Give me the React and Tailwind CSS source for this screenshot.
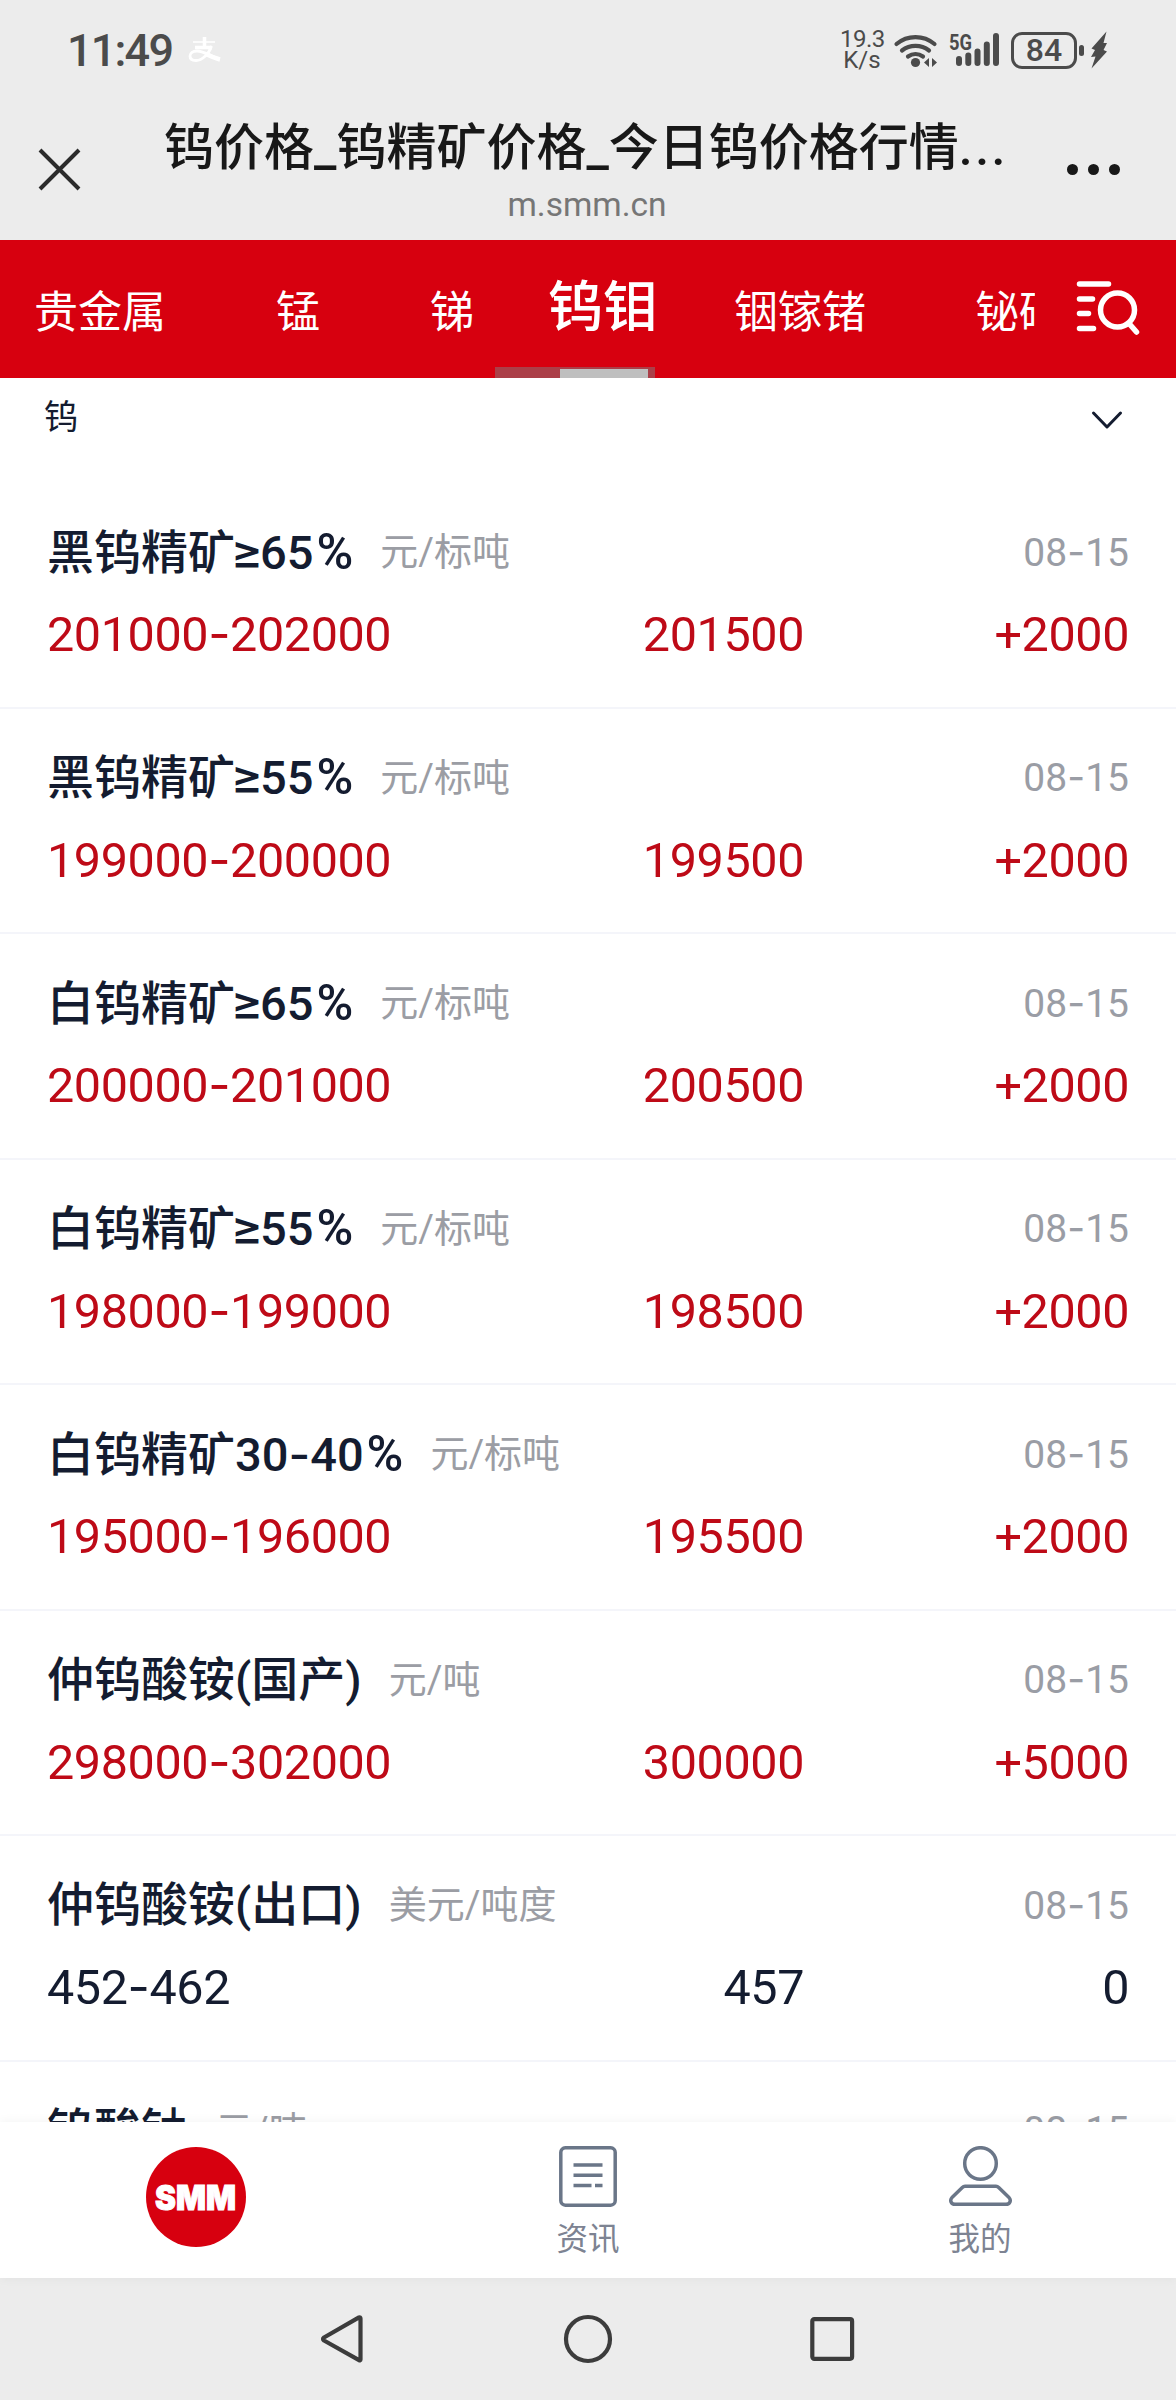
const TABS = [
  { label: '贵金属', className: 'w-[130px] ml-[34px]' },
  { label: '锰', className: 'w-[44px] ml-[112px]' },
  { label: '锑', className: 'w-[44px] ml-[110px]' },
  { label: '钨钼', active: true, className: 'w-[110px] ml-[74px]' },
  { label: '铟镓锗', className: 'w-[132px] ml-[76px]' },
  { label: '铋硒碲', className: 'w-[132px] ml-[109px]' },
]

const PRICES = [
  { name: '黑钨精矿≥65%', unit: '元/标吨', date: '08-15', range: '201000-202000', avg: '201500', change: '+2000' },
  { name: '黑钨精矿≥55%', unit: '元/标吨', date: '08-15', range: '199000-200000', avg: '199500', change: '+2000' },
  { name: '白钨精矿≥65%', unit: '元/标吨', date: '08-15', range: '200000-201000', avg: '200500', change: '+2000' },
  { name: '白钨精矿≥55%', unit: '元/标吨', date: '08-15', range: '198000-199000', avg: '198500', change: '+2000' },
  { name: '白钨精矿30-40%', unit: '元/标吨', date: '08-15', range: '195000-196000', avg: '195500', change: '+2000' },
  { name: '仲钨酸铵(国产)', unit: '元/吨', date: '08-15', range: '298000-302000', avg: '300000', change: '+5000' },
  { name: '仲钨酸铵(出口)', unit: '美元/吨度', date: '08-15', range: '452-462', avg: '457', change: '0' },
  { name: '钨酸钠', unit: '元/吨', date: '08-15', range: '', avg: '', change: '' },
]

// Inter has the wide hyphen and ≥, the rest of the text stays in Roboto.
const SYMBOLS = {
  '-': "font-['Inter']",
  '≥': "font-['Inter'] text-[48px] -ml-[4px] -mr-[3px]",
  '%': 'text-[50px] ml-[3px]',
}

function Mixed({ children }) {
  return children.split(/([-≥%])/).map((part, i) => (
    SYMBOLS[part] ? <span key={i} className={SYMBOLS[part]}>{part}</span> : part
  ))
}

function StatusBar() {
  return (
    <div className="flex items-center h-[100px] pl-[67px] pr-[67px] text-[#4b4b4b]">
      <span className="w-[106px] whitespace-nowrap text-[45px] leading-none font-medium tracking-[-1.8px]">11:49</span>
      <svg className="ml-[15px] w-[34px] h-[28px]" viewBox="0 0 34 28" fill="none" stroke="#fff">
        <path d="M5 6h22" strokeWidth="1.600" />
        <path d="M16.500 1v10M7 11.500h17" strokeWidth="3.500" />
        <path d="M23.500 10C21 18 14 24.500 8 24.500c-4 0-6-2-6-4.500C2 17 5 15 9 15c6 0 14 5 22.500 8" strokeWidth="2.800" />
        <path d="M18 18c5 2.500 10 4.500 14 5.500" strokeWidth="4.500" />
      </svg>
      <div className="ml-auto flex items-center">
        <div className="w-[44px] text-center text-[24px] leading-[21px]">
          <div className="tracking-[-0.5px]">19.3</div>
          <div>K/s</div>
        </div>
        <svg className="ml-[9px] w-[46px] h-[38px]" viewBox="0 0 46 38" fill="none" stroke="currentColor" strokeWidth="4.200" strokeLinecap="round">
          <path d="M3.500 13a29.500 29.500 0 0 1 38 0" />
          <path d="M9 19.500a22 22 0 0 1 27 0" />
          <path d="M15 25.500a13 13 0 0 1 15 0" />
          <circle cx="22.500" cy="31.500" r="4.600" fill="currentColor" stroke="none" />
          <path d="M36 27v9l-5-4.500zM39 27v9l5-4.500z" fill="currentColor" stroke="none" />
        </svg>
        <svg className="ml-[9px] w-[54px] h-[38px] overflow-visible" viewBox="0 0 54 38" fill="none" stroke="currentColor" strokeWidth="6" strokeLinecap="round">
          <text x="1" y="18.500" fontSize="22.500" fontWeight="700" textLength="23" lengthAdjust="spacingAndGlyphs" fill="currentColor" stroke="none">5G</text>
          <path d="M11 28v4M20.300 24.500v7.500M29.500 20.500v11.500M38.800 13.500v18.500M48 5v27" />
        </svg>
        <div className="ml-[9px] w-[66px] h-[37px] rounded-[11px] border-3 border-current flex items-center justify-center text-[32px] leading-none font-medium">
          84
        </div>
        <div className="ml-[2px] w-[5px] h-[11px] rounded-sm bg-current" />
        <svg className="ml-[6px] w-[19px] h-[38px]" viewBox="0 0 19 38" fill="currentColor">
          <path d="M16.500 0.500 1.500 17.500l3.500 1.500L1 26l4.500-0.500L1.500 37.500 17 20.500l-3.500-1.500L17 12h-3.500z" />
        </svg>
      </div>
    </div>
  )
}

function TitleBar() {
  return (
    <div className="flex h-[140px] text-[#181818]">
      <div className="w-[148px] pl-[38px] pt-[48px]">
        <svg className="w-[43px] h-[43px]" viewBox="0 0 43 43" stroke="#2b2b2b" strokeWidth="4">
          <path d="M2 2l39 39M41 2L2 41" />
        </svg>
      </div>
      <div className="flex-1 pt-[20px] text-center">
        <h1 className="h-[56px] text-[50px] leading-[56px] font-medium whitespace-nowrap">
          钨价格_钨精矿价格_今日钨价格行情<span className="tracking-[2.5px]">...</span>
        </h1>
        <div className="mt-[9px] pl-[2px] text-[33.500px] leading-[40px] text-[#767676]">m.smm.cn</div>
      </div>
      <div className="w-[152px] pl-[43px] pt-[64px] flex gap-[10px]">
        <span className="size-[11px] rounded-full bg-current" />
        <span className="size-[11px] rounded-full bg-current" />
        <span className="size-[11px] rounded-full bg-current" />
      </div>
    </div>
  )
}

function Tabs() {
  return (
    <nav className="relative flex h-[138px] bg-[#d7000f] text-white">
      <div className="flex w-[1035px] overflow-hidden whitespace-nowrap">
        {TABS.map(t => (
          <div key={t.label} className={`shrink-0 ${t.className}`}>
            <span className={t.active
              ? 'block pt-[31px] text-[55px] leading-[72px] font-medium'
              : 'block pt-[37px] text-[44px] leading-[72px]'}
            >
              {t.label}
            </span>
          </div>
        ))}
      </div>
      <svg className="ml-[39px] mt-[39px] w-[68px] h-[58px]" viewBox="0 0 68 58" fill="none" stroke="currentColor" strokeWidth="5.500" strokeLinecap="round">
        <path d="M5.500 5h29M5.500 20h13M5.500 34.500h9M5.500 49.500h14" />
        <circle cx="43.500" cy="31" r="17" />
        <path d="M55.500 45l7 8" />
      </svg>
      <div className="absolute left-[495px] bottom-0 w-[160px] h-[11px] bg-[#ab3f48]">
        <div className="ml-[65px] mt-[2px] w-[88px] h-[9px] bg-[#bfbfbf]" />
      </div>
    </nav>
  )
}

function PriceRow({ item }) {
  const color = item.change.startsWith('+') ? 'text-[#be0a17]' : 'text-[#141c30]'
  return (
    <div className="h-[225.500px] shrink-0 px-[47px] pt-[39px] border-b-2 border-[#f4f5fa]">
      <div className="flex items-center h-[60px]">
        <span className="text-[47px] leading-[60px] font-medium text-[#141c30]"><Mixed>{item.name}</Mixed></span>
        <span className="ml-[27px] text-[38px] leading-[60px] text-[#9b9da4]">{item.unit}</span>
        <span className="ml-auto text-[39px] leading-[60px] text-[#9a9da5]"><Mixed>{item.date}</Mixed></span>
      </div>
      <div className={`flex items-baseline mt-[22px] text-[48.500px] leading-[60px] tracking-[-0.4px] ${color}`}>
        <span className="w-[400px]"><Mixed>{item.range}</Mixed></span>
        <span className="w-[357px] text-right">{item.avg}</span>
        <span className="flex-1 text-right">{item.change}</span>
      </div>
    </div>
  )
}

function BottomTabs() {
  return (
    <div className="relative grid grid-cols-3 h-[156px] bg-white text-[31.500px] leading-[40px] text-[#7d8392] shadow-[0_0_10px_rgba(0,0,0,0.06)]">
      <div className="flex justify-center pt-[25px]">
        <svg className="size-[100px]" viewBox="0 0 100 100">
          <circle cx="50" cy="50" r="50" fill="#d7000f" />
          <text x="9" y="62.500" fontFamily="Inter" fontSize="34" fontWeight="900" fill="#fff" stroke="#fff" strokeWidth="1" textLength="81" lengthAdjust="spacingAndGlyphs">SMM</text>
        </svg>
      </div>
      <div className="flex flex-col items-center pt-[24px]">
        <svg className="w-[58px] h-[61px]" viewBox="0 0 58 61" fill="none" stroke="#6a7688" strokeWidth="3.500">
          <rect x="1.800" y="1.800" width="54.400" height="57.400" rx="4.500" />
          <path d="M14.500 19h29M14.500 29.300h29M14.500 39.600h18M36 39.600h7.500" />
        </svg>
        <span className="mt-[13px]">资讯</span>
      </div>
      <div className="flex flex-col items-center pt-[24px]">
        <svg className="w-[63px] h-[61px]" viewBox="0 0 63 61" fill="none" stroke="#6a7688" strokeWidth="3.500" strokeLinejoin="round">
          <circle cx="31.500" cy="17.500" r="15.800" />
          <path d="M16 40.200h31q1.500 0 2.700 1.200L60 51.500c2.500 3 1 6.800-3 6.800H6c-4 0-5.500-3.800-3-6.800L13.300 41.400q1.200-1.200 2.700-1.200z" />
        </svg>
        <span className="mt-[13px]">我的</span>
      </div>
    </div>
  )
}

function SystemNav() {
  return (
    <div className="flex h-[122px] pt-[36px] pl-[319px] bg-[#ececec]">
      <svg className="w-[46px] h-[50px]" viewBox="0 0 46 50" fill="none" stroke="#3c3c3c" strokeWidth="4.200" strokeLinejoin="round">
        <path d="M41.500 4.500v41q0 1.500-1.500 0.600L5 26.500q-2-1.500 0-3L40 3.400q1.500-0.600 1.500 1.100z" />
      </svg>
      <svg className="ml-[198px] w-[50px] h-[50px]" viewBox="0 0 50 50" fill="none" stroke="#3c3c3c" strokeWidth="4.200">
        <circle cx="25" cy="25" r="22" />
      </svg>
      <svg className="ml-[195px] w-[50px] h-[50px]" viewBox="0 0 50 50" fill="none" stroke="#3c3c3c" strokeWidth="4.200">
        <rect x="4.300" y="5.200" width="39.800" height="39.600" rx="2" />
      </svg>
    </div>
  )
}

export default function App() {
  return (
    <div className="flex flex-col w-[1176px] h-[2400px] overflow-hidden bg-white font-['Roboto','Noto_Sans_CJK_SC',sans-serif]">
      <header className="bg-[#ececec]">
        <StatusBar />
        <TitleBar />
      </header>
      <Tabs />
      <div className="flex justify-between shrink-0 h-[105px] pl-[44px] pr-[53px] pt-[9px] text-[#141c30]">
        <span className="text-[34px] leading-[60px]">钨</span>
        <svg className="mt-[23px] w-[32px] h-[20px]" viewBox="0 0 32 20" fill="none" stroke="currentColor" strokeWidth="3" strokeLinecap="round" strokeLinejoin="round">
          <path d="M2.500 3L16 17 29.500 3" />
        </svg>
      </div>
      <main className="flex flex-col flex-1 min-h-0 overflow-hidden">
        {PRICES.map(item => <PriceRow key={item.name} item={item} />)}
      </main>
      <BottomTabs />
      <SystemNav />
    </div>
  )
}
